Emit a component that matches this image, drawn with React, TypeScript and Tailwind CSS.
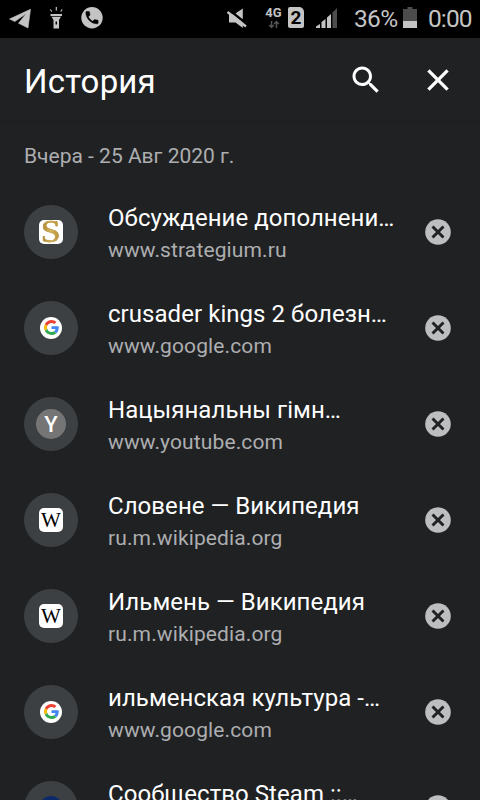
import type { ReactNode } from 'react';

type Site = 'strategium' | 'google' | 'youtube' | 'wikipedia' | 'steam';

interface HistoryEntry {
  site: Site;
  title: string;
  host?: string;
}

const entries: HistoryEntry[] = [
  { site: 'strategium', title: 'Обсуждение дополнени…', host: 'www.strategium.ru' },
  { site: 'google', title: 'crusader kings 2 болезн…', host: 'www.google.com' },
  { site: 'youtube', title: 'Нацыянальны гімн…', host: 'www.youtube.com' },
  { site: 'wikipedia', title: 'Словене — Википедия', host: 'ru.m.wikipedia.org' },
  { site: 'wikipedia', title: 'Ильмень — Википедия', host: 'ru.m.wikipedia.org' },
  { site: 'google', title: 'ильменская культура -…', host: 'www.google.com' },
  { site: 'steam', title: 'Сообщество Steam ::…' },
];

function GoogleIcon() {
  return (
    <div className="-mt-px flex h-[22px] w-[22px] items-center justify-center rounded-full bg-white">
      <svg viewBox="0 0 48 48" className="h-[15px] w-[15px]">
        <path fill="#EA4335" d="M24 9.5c3.54 0 6.71 1.22 9.21 3.6l6.85-6.85C35.9 2.38 30.47 0 24 0 14.62 0 6.51 5.38 2.56 13.22l7.98 6.19C12.43 13.72 17.74 9.5 24 9.5z" />
        <path fill="#4285F4" d="M46.98 24.55c0-1.57-.15-3.09-.38-4.55H24v9.02h12.94c-.58 2.96-2.26 5.48-4.78 7.18l7.73 6c4.51-4.18 7.09-10.36 7.09-17.65z" />
        <path fill="#FBBC05" d="M10.53 28.59c-.48-1.45-.76-2.99-.76-4.59s.27-3.14.76-4.59l-7.98-6.19C.92 16.46 0 20.12 0 24c0 3.88.92 7.54 2.56 10.78l7.97-6.19z" />
        <path fill="#34A853" d="M24 48c6.48 0 11.93-2.13 15.89-5.81l-7.73-6c-2.15 1.45-4.92 2.3-8.16 2.3-6.26 0-11.57-4.22-13.47-9.91l-7.98 6.19C6.51 42.62 14.62 48 24 48z" />
      </svg>
    </div>
  );
}

function SquareIcon({ children }: { children: ReactNode }) {
  return <div className="flex h-6 w-6 items-center justify-center rounded-[5px] bg-white">{children}</div>;
}

function Favicon({ site }: { site: Site }) {
  switch (site) {
    case 'google':
      return <GoogleIcon />;
    case 'strategium':
      return (
        <SquareIcon>
          <span className="scale-x-115 bg-linear-to-r from-[#a07c30] via-[#d9b75c] to-[#b08a38] bg-clip-text font-['Liberation_Serif',serif] text-[31px] leading-7 text-transparent [-webkit-text-stroke:0.5px_#b8933f]">
            S
          </span>
        </SquareIcon>
      );
    case 'wikipedia':
      return (
        <SquareIcon>
          <span className="font-['Liberation_Serif',serif] text-[21px] leading-6 text-black">W</span>
        </SquareIcon>
      );
    case 'youtube':
      return (
        <div className="flex h-[30px] w-[30px] items-center justify-center rounded-full bg-[#757575] text-[22px] leading-none font-medium text-white">
          <span className="pt-px">Y</span>
        </div>
      );
    default:
      return <div className="h-6 w-6 rounded-full bg-[#0c2a6a]" />;
  }
}

function RemoveButton() {
  return (
    <button className="flex h-9 w-9 items-center justify-center">
      <svg viewBox="0 0 26 26" className="h-[26px] w-[26px]">
        <circle cx="13" cy="13" r="12.8" fill="#bdbec0" />
        <path d="M7.5 7.5l11 11M18.5 7.5l-11 11" stroke="#202124" strokeWidth="2.9" />
      </svg>
    </button>
  );
}

function HistoryRow({ entry }: { entry: HistoryEntry }) {
  return (
    <li className="flex h-24 shrink-0 items-center px-6">
      <div className="flex h-[54px] w-[54px] shrink-0 items-center justify-center rounded-full bg-[#3c4043]">
        <Favicon site={entry.site} />
      </div>
      <div className="ml-[30px] h-16 min-w-0 flex-1 pt-0.5">
        <div className="text-[24px] leading-8 tracking-[0.05px] whitespace-nowrap text-white">{entry.title}</div>
        {entry.host && <div className="text-[21px] leading-8 tracking-[0.12px] whitespace-nowrap text-[#adaeb0]">{entry.host}</div>}
      </div>
      <RemoveButton />
    </li>
  );
}

function StatusBar() {
  return (
    <div className="flex h-[38px] shrink-0 items-center justify-between bg-black text-[#c4c4c4]">
      <svg viewBox="0 0 120 38" className="h-[38px] w-[120px]" fill="currentColor">
        <path d="M9.5 19L30.5 9.3L28 28L18.5 23.2L26.3 13.6L14.8 21.6Z" stroke="currentColor" strokeWidth="0.6" strokeLinejoin="round" />
        <path d="M50.5 14h11.5v2H50.5zM51.5 16.8h9.5l-2 3.2v8.5h-5.5V20z" />
        <path d="M51.8 11.5l-1.5-2M56.3 10.5V7M60.7 11.5l1.5-2" stroke="currentColor" strokeWidth="1.2" />
        <path d="M56.3 21.5v3" stroke="#000" strokeWidth="1.5" />
        <circle cx="92" cy="17.7" r="10.7" />
        <path
          transform="translate(83.8 9.5) scale(.68)"
          fill="#000"
          stroke="#000"
          strokeWidth="0.8"
          d="M6.62 10.79c1.44 2.83 3.76 5.14 6.59 6.59l2.2-2.2c.27-.27.67-.36 1.02-.24 1.12.37 2.33.57 3.57.57.55 0 1 .45 1 1V20c0 .55-.45 1-1 1-9.39 0-17-7.61-17-17 0-.55.45-1 1-1h3.5c.55 0 1 .45 1 1 0 1.25.2 2.45.57 3.57.11.35.03.74-.25 1.02l-2.2 2.2z"
        />
      </svg>
      <div className="flex h-full w-[258px] items-center">
        <svg viewBox="0 0 30 38" className="h-[38px] w-[30px]" fill="currentColor">
          <path d="M13.5 13.5L20.8 8.5V19.300z" />
          <path d="M7 14.500h4L20.800 22.500v5.500L13.500 22.500H7z" />
          <path d="M5.500 12L24 26.500" stroke="currentColor" strokeWidth="2.400" />
        </svg>
        <div className="ml-2.5 flex w-[23px] flex-col items-center pb-0.5">
          <span className="text-[13px] leading-3 font-bold">4G</span>
          <svg viewBox="0 0 12 9" className="mt-px h-[9px] w-3" stroke="#555" strokeWidth="1.5" fill="none">
            <path d="M3.5 1v6M1.2 5l2.3 2.5L5.8 5M8.5 8V2M6.2 4l2.3-2.5L10.8 4" />
          </svg>
        </div>
        <div className="mb-[3px] ml-[3px] flex h-[21px] w-4 items-center justify-center rounded-[2px] rounded-tr-[5px] bg-[#c4c4c4] text-[19px] leading-none font-bold text-black">
          2
        </div>
        <svg viewBox="0 0 24 22" className="mb-0.5 ml-3 h-[22px] w-6" fill="currentColor">
          <path d="M0 21v-1.500L4 17v4zM5.500 21v-6L9.500 12v9zM11 21V10.500L15 7v14z" />
          <path fill="#4c4c4c" d="M16.500 21V5.500L21 1v20z" />
        </svg>
        <span className="ml-3.5 w-[46px] text-[24.5px] tracking-[-0.7px] whitespace-nowrap">36%</span>
        <svg viewBox="0 0 14 22" className="mb-[3px] ml-[3px] h-[22px] w-[14px]">
          <path fill="#4c4c4c" d="M4.5 0h5v2H14v12H0V2h4.500z" />
          <path fill="#c4c4c4" d="M0 14h14v7H0z" />
        </svg>
        <span className="ml-[11px] text-[24.5px] tracking-[-0.9px]">0:00</span>
      </div>
    </div>
  );
}

export default function App() {
  return (
    <div className="flex h-[800px] w-[480px] flex-col overflow-hidden bg-[#202123] font-['Roboto',sans-serif]">
      <StatusBar />
      <header className="flex h-[84px] shrink-0 items-center border-b border-[#1c1d1f] px-6">
        <h1 className="flex-1 pt-1 text-[33px] leading-10 tracking-[0.2px] text-white">История</h1>
        <button className="pt-px">
          <svg viewBox="0 0 24 24" className="h-9 w-9" fill="#fff">
            <path d="M15.5 14h-.79l-.28-.27C15.41 12.59 16 11.11 16 9.5 16 5.91 13.09 3 9.5 3S3 5.91 3 9.5 5.91 16 9.5 16c1.61 0 3.09-.59 4.23-1.57l.27.28v.79l5 4.99L20.49 19l-4.99-5zm-6 0C7.01 14 5 11.99 5 9.5S7.01 5 9.5 5 14 7.01 14 9.5 11.99 14 9.5 14z" />
          </svg>
        </button>
        <button className="ml-9">
          <svg viewBox="0 0 24 24" className="h-9 w-9" fill="#fff" stroke="#fff" strokeWidth="0.3">
            <path d="M19 6.41L17.59 5 12 10.59 6.41 5 5 6.41 10.59 12 5 17.59 6.41 19 12 13.41 17.59 19 19 17.59 13.41 12z" />
          </svg>
        </button>
      </header>
      <h2 className="h-[62px] shrink-0 px-6 pt-[18px] text-[21px] leading-8 text-[#adaeb0]">Вчера - 25 Авг 2020 г.</h2>
      <ul>
        {entries.map((entry) => (
          <HistoryRow key={entry.title} entry={entry} />
        ))}
      </ul>
    </div>
  );
}
